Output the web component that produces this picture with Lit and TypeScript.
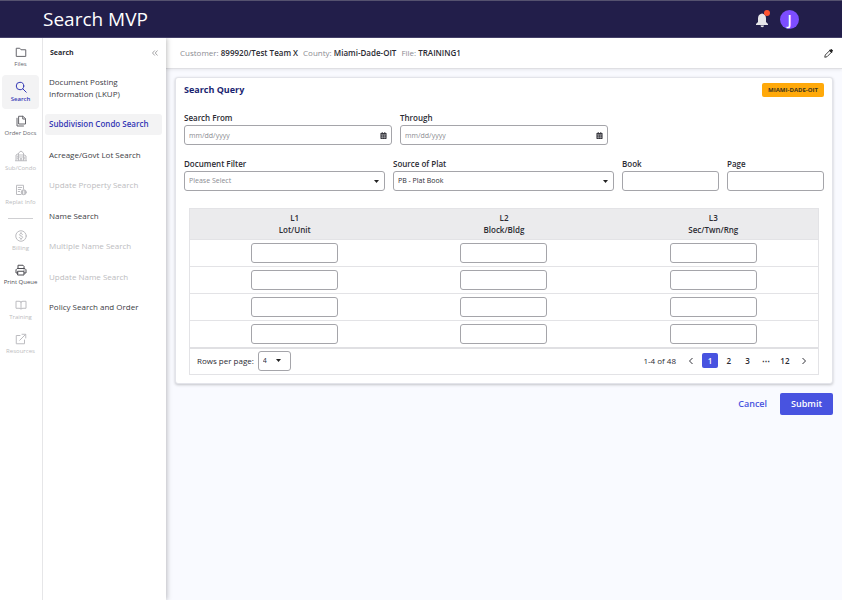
import { LitElement, html, css, svg, nothing } from "lit";
import { customElement, property } from "lit/decorators.js";
import { classMap } from "lit/directives/class-map.js";

const icons: Record<string, unknown> = {
  files: svg`<path d="M2.500 20V4.500h7l2.500 3h9.500V20z"/>`,
  search: svg`<circle cx="10" cy="10" r="7.500"/><path d="M15.500 15.500l7 7"/>`,
  docs: svg`<path d="M8 2.500h8l5 5V18H8zM15.500 2.500V8H21M4 6.500v15.500h13"/>`,
  condo: svg`<path d="M2 21V10l5-3v14M7 21V6l5-4 5 4v15M17 9l5 3v9M1 21.500h22M10.500 21v-4h3v4M10 9v2M14 9v2M10 13v2M14 13v2M4.500 12v2M4.500 16v2M19.500 14v1M19.500 17v1"/>`,
  replat: svg`<path d="M12 21H3V2.500h14V10M6.500 7h7M6.500 11h5M6.500 15h3"/><circle cx="17.500" cy="16.500" r="5" fill="currentColor"/><path d="M17.500 14v1M17.500 16.500v3" stroke="#fff"/>`,
  billing: svg`<circle cx="12" cy="12" r="10.500"/><path d="M15 9c-.5-1.300-1.500-1.800-3-1.800-1.800 0-3 .9-3 2.300 0 3.300 6.200 1.600 6.200 5 0 1.500-1.300 2.400-3.200 2.400-1.700 0-2.900-.7-3.300-2.100M12 5v2M12 17v2"/>`,
  print: svg`<path d="M6 9V2.500h10l2 2V9M6 18H2v-6.500L4.500 9h15l2.500 2.500V18h-4M6 14.500h12v7.500H6z"/><path d="M18 12h.5"/>`,
  training: svg`<path d="M12 6c-1-1-2-1.500-4-1.500H2v14h6c2 0 3 .5 4 1.500 1-1 2-1.500 4-1.500h6v-14h-6c-2 0-3 .5-4 1.500zV20"/>`,
  resources: svg`<path d="M10 5H2.500v16.500H19V14M14 2.500h7.500V10M21 3L9.500 14.500"/>`,
};

@customElement("app-icon")
class AppIcon extends LitElement {
  @property() name = "";
  static styles = css`
    :host { display: block; width: 12px; height: 12px; }
    .glyph { display: block; width: 100%; height: 100%; fill: none; stroke: currentColor; stroke-width: 2; stroke-linejoin: round; stroke-linecap: round; }
  `;
  render() {
    return html`<svg class="glyph" viewBox="0 0 24 24" aria-hidden="true">${icons[this.name] ?? nothing}</svg>`;
  }
}

type Item = { label: string; icon?: string; active?: boolean; disabled?: boolean; strong?: boolean };

const railTop: Item[] = [
  { label: "Files", icon: "files" },
  { label: "Search", icon: "search", active: true },
  { label: "Order Docs", icon: "docs" },
  { label: "Sub/Condo", icon: "condo", disabled: true },
  { label: "Replat Info", icon: "replat", disabled: true },
];
const railBottom: Item[] = [
  { label: "Billing", icon: "billing", disabled: true },
  { label: "Print Queue", icon: "print", strong: true },
  { label: "Training", icon: "training", disabled: true },
  { label: "Resources", icon: "resources", disabled: true },
];
const searches: Item[] = [
  { label: "Document Posting Information (LKUP)" },
  { label: "Subdivision Condo Search", active: true },
  { label: "Acreage/Govt Lot Search" },
  { label: "Update Property Search", disabled: true },
  { label: "Name Search" },
  { label: "Multiple Name Search", disabled: true },
  { label: "Update Name Search", disabled: true },
  { label: "Policy Search and Order" },
];
const columns = [
  ["L1", "Lot/Unit"],
  ["L2", "Block/Bldg"],
  ["L3", "Sec/Twn/Rng"],
];

@customElement("app-root")
class AppRoot extends LitElement {
  static styles = css`
    :host { display: flex; flex-direction: column; min-height: 100vh; background: #f9faff; color: #2b2b33; font-family: "Open Sans", "Noto Sans", sans-serif; font-size: 8px; line-height: 12px; }
    * { box-sizing: border-box; }
    button, input, select { font: inherit; color: inherit; margin: 0; }
    button { border: 0; padding: 0; background: none; cursor: pointer; }
    a { color: inherit; text-decoration: none; }
    ul { list-style: none; margin: 0; padding: 0; }
    h1, h2, h3 { margin: 0; }

    .top { display: flex; align-items: center; height: 38px; padding: 0 43px; background: #221e4a; color: #fff; border-top: 1px solid #55526f; border-bottom: 1px solid #45416a; }
    .brand { flex: 1; font-size: 19px; line-height: 24px; font-weight: 500; }
    .bell { width: 16px; height: 18px; }
    .bell svg { display: block; width: 16px; height: 18px; }
    .avatar { width: 19px; height: 19px; margin-left: 10px; border-radius: 50%; background: #7c4dff; color: #fff; font-size: 14px; line-height: 19px; font-weight: 600; }

    .body { flex: 1; display: flex; }
    .rail { width: 43px; flex: none; padding: 2px 3px 0 2px; background: #fff; border-right: 1px solid #e6e6e8; }
    .group { display: grid; grid-auto-rows: 1fr; height: 173px; }
    .group.second { height: 137px; }
    .rail a { display: flex; flex-direction: column; align-items: center; gap: 1px; padding-top: 6px; border-radius: 4px; color: #66666c; font-size: 6px; line-height: 10px; white-space: nowrap; }
    .rail .active { background: #f3f3f4; color: #3338b5; font-weight: 600; }
    .rail .disabled { color: #bcbcc0; }
    .rail .strong { color: #4d4d53; font-weight: 500; }
    .rule { width: 25px; height: 1px; margin: 5px auto 5px; border: 0; background: #cfcfd2; }

    .side { width: 123px; flex: none; z-index: 1; padding: 0 4px 0 2px; background: #fff; box-shadow: 1px 0 5px rgba(0, 0, 0, 0.25); clip-path: inset(0 -8px 0 0); }
    .side-head { display: flex; justify-content: space-between; align-items: center; height: 30px; padding: 0 4px 0 5px; }
    .side-head h2 { font-size: 7px; line-height: 12px; font-weight: 700; }
    .fold { width: 6px; height: 6px; color: #85858a; }
    .fold svg { display: block; width: 6px; height: 6px; }
    .list { display: flex; flex-direction: column; justify-content: space-between; height: 247px; margin-top: 3px; }
    .list a { display: block; padding: 5px 30px 5px 4px; border-radius: 3px; line-height: 12px; color: #3d3d44; }
    .list .single { padding: 4px 0 5px 4px; white-space: nowrap; }
    .list .active { background: #f3f3f4; color: #3338b5; font-weight: 600; }
    .list .disabled { color: #bcbcc0; }

    main { flex: 1; min-width: 0; }
    .info { display: flex; align-items: center; gap: 5px; height: 31px; padding: 0 9px 0 14px; background: #fff; border-bottom: 1px solid #dfdfe3; box-shadow: 0 1px 3px rgba(0, 0, 0, 0.08); color: #8b8b92; white-space: nowrap; }
    .info b { font-weight: 600; color: #2b2b33; }
    .edit { margin-left: auto; width: 9px; height: 9px; color: #222; }
    .edit svg { display: block; width: 9px; height: 9px; }

    .card { margin: 8px 9px 0; padding: 5px 8px 8px; background: #fff; border: 1px solid #e3e4ea; border-radius: 3px; box-shadow: 0 1px 3px rgba(0, 0, 0, 0.22); }
    .card-head { display: flex; justify-content: space-between; align-items: center; height: 14px; }
    .card-head h2 { font-size: 9px; line-height: 14px; font-weight: 700; color: #1a1f71; }
    .badge { padding: 0 6px; border-radius: 2px; background: #ffa90a; color: #40341c; font-size: 6px; line-height: 14px; font-weight: 700; }
    .fields { display: grid; gap: 8px; margin-top: 14px; }
    .dates { grid-template-columns: repeat(3, minmax(0, 1fr)); margin-top: 15px; }
    .plat { grid-template-columns: minmax(0, 201fr) minmax(0, 221fr) minmax(0, 97fr) minmax(0, 97fr); margin-top: 13px; }
    .field label { display: block; margin-bottom: 1px; line-height: 12px; font-weight: 600; }
    .control { display: grid; align-items: center; }
    .control > * { grid-area: 1 / 1; }
    .control svg { justify-self: end; margin-right: 5px; pointer-events: none; }
    .box { width: 100%; height: 20px; padding: 0 4px; border: 1px solid #a5a5aa; border-radius: 3px; background: #fff; font-size: 7px; font-weight: 400; appearance: none; outline: none; }
    .box::placeholder { color: #8b8b92; opacity: 1; }
    .muted { color: #8b8b92; }
    .control .caret { width: 5px; height: 3px; margin-right: 6px; }
    .cal { width: 7px; height: 7px; }

    .grid { margin: 17px 5px 0; border: 1px solid #e3e3e6; }
    table { width: 100%; border-collapse: collapse; table-layout: fixed; }
    th { height: 30px; padding: 0; background: #ebebed; font-size: 8px; line-height: 12px; font-weight: 600; }
    td { height: 27px; padding: 0; text-align: center; border-top: 1px solid #e3e3e6; }
    td .box { display: block; width: 87px; margin: 0 auto; }
    .foot { display: flex; align-items: center; height: 27px; padding: 0 5px 2px 7px; border-top: 2px solid #e0e0e3; font-weight: 500; }
    .foot .control { width: 33px; margin-left: 4px; }
    .foot .control .caret { margin-right: 10px; }
    .count { margin-left: auto; }
    .pager { display: grid; grid-template-columns: repeat(7, minmax(0, 1fr)); justify-items: center; align-items: center; width: 131px; margin-left: 6px; font-weight: 600; }
    .pager button { width: 16px; height: 15px; border-radius: 2px; line-height: 15px; text-align: center; }
    .pager .current { background: #4853e0; color: #fff; }
    .pager svg { display: block; width: 6px; height: 8px; margin: auto; }

    .actions { display: flex; justify-content: flex-end; gap: 13px; padding: 9px 9px 12px; }
    .actions button { height: 22px; border-radius: 2px; font-size: 9px; line-height: 22px; font-weight: 600; color: #4853e0; }
    .actions .submit { padding: 0 11px; background: #4853e0; color: #fff; }
  `;

  private railLink(i: Item) {
    return html`<a href="#" class=${classMap({ active: !!i.active, disabled: !!i.disabled, strong: !!i.strong })}><app-icon name=${i.icon ?? ""}></app-icon><span>${i.label}</span></a>`;
  }

  private caret() {
    return html`<svg class="caret" viewBox="0 0 10 6" aria-hidden="true"><path d="M0 0h10L5 6z" fill="#222"/></svg>`;
  }

  private dateField(id: string, label: string) {
    return html`<div class="field">
      <label for=${id}>${label}</label>
      <div class="control">
        <input class="box" id=${id} type="text" placeholder="mm/dd/yyyy" />
        <svg class="cal" viewBox="0 0 14 16" aria-hidden="true">
          <path d="M1 2h2V0h2v2h4V0h2v2h2l1 1v12l-1 1H1l-1-1V3z" fill="#33333a"/>
          <path d="M1 5.500h12M1 9h12M1 12.500h12M4.500 6v9M9.500 6v9" stroke="#fff" stroke-width=".7"/>
        </svg>
      </div>
    </div>`;
  }

  private chevron(d: string) {
    return html`<svg viewBox="0 0 6 8" fill="none" stroke="#33333a" stroke-width="1" aria-hidden="true"><path d=${d}/></svg>`;
  }

  render() {
    return html`
      <header class="top">
        <h1 class="brand">Search MVP</h1>
        <button class="bell" aria-label="Notifications">
          <svg viewBox="0 0 32 36">
            <path d="M14 7c-6 1-8 5-8 10v7l-4 4v2h24v-2l-4-4v-7c0-5-2-9-8-10zM11 31a3.500 3.500 0 0 0 7 0z" transform="translate(2 0)" fill="#e6e6e9"/>
            <circle cx="26" cy="6" r="6" fill="#ff5330"/>
          </svg>
        </button>
        <button class="avatar" aria-label="Account">J</button>
      </header>
      <div class="body">
        <nav class="rail" aria-label="Main">
          <div class="group">${railTop.map((i) => this.railLink(i))}</div>
          <hr class="rule" />
          <div class="group second">${railBottom.map((i) => this.railLink(i))}</div>
        </nav>
        <nav class="side" aria-label="Search types">
          <div class="side-head">
            <h2>Search</h2>
            <button class="fold" aria-label="Collapse">
              <svg viewBox="0 0 12 12" fill="none" stroke="currentColor" stroke-width="1.500"><path d="M5.500 1L1 6l4.500 5M11 1L6.500 6l4.500 5"/></svg>
            </button>
          </div>
          <ul class="list">
            ${searches.map((i, n) => html`<li><a href="#" class=${classMap({ single: n > 0, active: !!i.active, disabled: !!i.disabled })}>${i.label}</a></li>`)}
          </ul>
        </nav>
        <main>
          <div class="info">
            <span>Customer: <b>899920/Test Team X</b></span>
            <span>County: <b>Miami-Dade-OIT</b></span>
            <span>File: <b>TRAINING1</b></span>
            <button class="edit" aria-label="Edit">
              <svg viewBox="0 0 18 18" fill="none" stroke="currentColor" stroke-width="1.700"><path d="M1.500 16.500l1-4.500 9-9 3.500 3.500-9 9z"/><path d="M11 2l5 5M12.500 4l2-2.500 2 2-2.500 2z" stroke-width="2.500"/></svg>
            </button>
          </div>
          <form @submit=${(e: Event) => e.preventDefault()}>
            <section class="card">
              <div class="card-head"><h2>Search Query</h2><span class="badge">MIAMI-DADE-OIT</span></div>
              <div class="fields dates">
                ${this.dateField("from", "Search From")}
                ${this.dateField("through", "Through")}
              </div>
              <div class="fields plat">
                <div class="field">
                  <label for="filter">Document Filter</label>
                  <div class="control"><select class="box muted" id="filter"><option>Please Select</option></select>${this.caret()}</div>
                </div>
                <div class="field">
                  <label for="source">Source of Plat</label>
                  <div class="control"><select class="box" id="source"><option>PB - Plat Book</option></select>${this.caret()}</div>
                </div>
                <div class="field"><label for="book">Book</label><input class="box" id="book" type="text" /></div>
                <div class="field"><label for="page">Page</label><input class="box" id="page" type="text" /></div>
              </div>
              <div class="grid">
                <table>
                  <thead><tr>${columns.map(([a, b]) => html`<th scope="col">${a}<br />${b}</th>`)}</tr></thead>
                  <tbody>
                    ${[1, 2, 3, 4].map((r) => html`<tr>${columns.map(([a, b]) => html`<td><input class="box" type="text" aria-label="${a} ${b} ${r}" /></td>`)}</tr>`)}
                  </tbody>
                </table>
                <div class="foot">
                  <label for="rows">Rows per page:</label>
                  <div class="control"><select class="box" id="rows"><option>4</option></select>${this.caret()}</div>
                  <span class="count">1-4 of 48</span>
                  <div class="pager">
                    <button type="button" aria-label="Previous page">${this.chevron("M4.500 1L1.500 4l3 3")}</button>
                    <button type="button" class="current" aria-current="page">1</button>
                    <button type="button">2</button>
                    <button type="button">3</button>
                    <span>⋯</span>
                    <button type="button">12</button>
                    <button type="button" aria-label="Next page">${this.chevron("M1.500 1l3 3-3 3")}</button>
                  </div>
                </div>
              </div>
            </section>
            <div class="actions">
              <button type="button">Cancel</button>
              <button type="submit" class="submit">Submit</button>
            </div>
          </form>
        </main>
      </div>
    `;
  }
}
